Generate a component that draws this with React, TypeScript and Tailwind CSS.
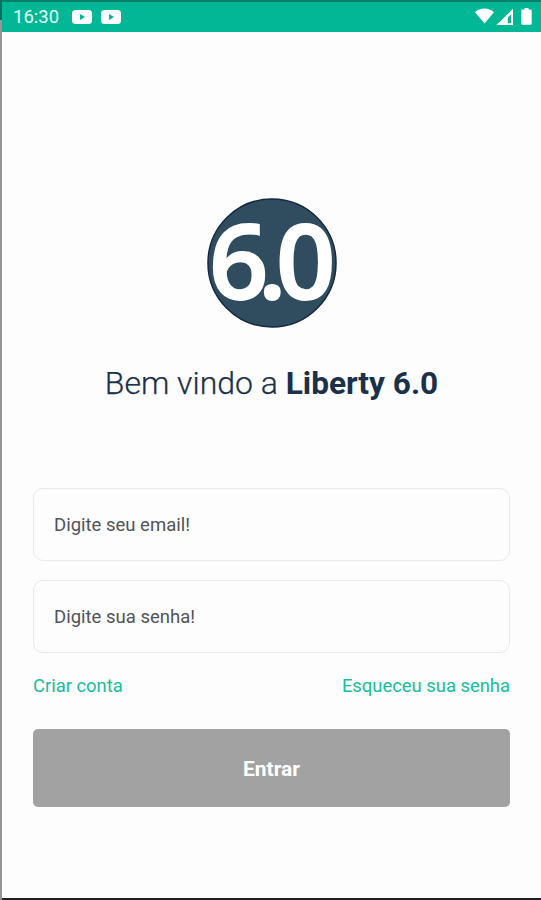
import { useState } from 'react';

function PlayBadge() {
  return (
    <svg width="20" height="14" viewBox="0 0 20 14">
      <rect width="20" height="14" rx="3.5" fill="#fff" />
      <path d="M8 4v6l5-3z" fill="#02b795" />
    </svg>
  );
}

function StatusBar() {
  return (
    <header className="flex h-8 shrink-0 items-center border-t-2 border-[#04806a] bg-[#02b795] pl-[11px] pr-2 text-white">
      <span className="w-[59px] text-[18.5px] leading-none text-[#e2fff8]">16:30</span>
      <div className="flex gap-[9px]">
        <PlayBadge />
        <PlayBadge />
      </div>
      <svg className="ml-auto" width="58" height="18" viewBox="0 0 58 18" fill="#fff">
        <path d="M0 4.2C5.5-.6 13.5-.6 19 4.2L9.5 15.500z" />
        <path fillRule="evenodd" d="M38 .7V17H21.5zM36 6.500L32.800 9.700V15.200H36z" />
        <path d="M49.500 0h4v1.500h2q1.200 0 1.200 1.200v12.800q0 1.200-1.200 1.200h-8q-1.200 0-1.200-1.200V2.700q0-1.200 1.200-1.200h2z" />
      </svg>
    </header>
  );
}

function Logo() {
  return (
    <svg width="130" height="130" viewBox="0 0 130 130" overflow="visible">
      <circle cx="65" cy="65" r="64" fill="#304d60" stroke="#14283f" strokeWidth="1.5" />
      <text
        x="2"
        y="101"
        fill="#fff"
        stroke="#fff"
        strokeWidth="1.8"
        fontFamily="'Open Sans', 'Noto Sans', sans-serif"
        fontSize="104"
        fontWeight="600"
        letterSpacing="-10.5"
      >
        6.0
      </text>
    </svg>
  );
}

type FieldProps = {
  type: string;
  placeholder: string;
  value: string;
  onChange: (value: string) => void;
};

function Field({ type, placeholder, value, onChange }: FieldProps) {
  return (
    <input
      type={type}
      placeholder={placeholder}
      value={value}
      onChange={(e) => onChange(e.target.value)}
      className="h-[73px] w-full rounded-[10px] border-[1.5px] border-[#e8e9e9] bg-[#fdfdfe] px-5 pt-px text-[18.5px] text-[#505357] outline-none placeholder:text-[#505357]"
    />
  );
}

export default function App() {
  const [email, setEmail] = useState('');
  const [password, setPassword] = useState('');

  return (
    <div className="flex h-[900px] w-full bg-[#fdfdfd] font-['Roboto',sans-serif]">
      <div className="flex w-0.5 shrink-0 flex-col">
        <div className="h-5 bg-[#04705f]" />
        <div className="flex-1 bg-[#969696]" />
      </div>
      <div className="flex min-w-0 flex-1 flex-col border-b-2 border-[#202020]">
        <StatusBar />
        <main className="flex flex-1 flex-col px-[31px] pt-[166px]">
          <div className="flex flex-col items-center">
            <Logo />
            <h1 className="mt-[35px] h-10 whitespace-nowrap text-[32px] leading-10 font-light text-[#1b3049] [-webkit-text-stroke:0.25px_#1b3049]">
              Bem vindo a <strong className="text-[31.6px] font-bold [-webkit-text-stroke:0]">Liberty 6.0</strong>
            </h1>
          </div>
          <form className="mt-[85px] flex flex-col" onSubmit={(e) => e.preventDefault()}>
            <div className="flex flex-col gap-[19px]">
              <Field type="email" placeholder="Digite seu email!" value={email} onChange={setEmail} />
              <Field type="password" placeholder="Digite sua senha!" value={password} onChange={setPassword} />
            </div>
            <div className="mt-[21px] flex justify-between text-[18.4px] leading-6 text-[#17bd9c]">
              <a href="#">Criar conta</a>
              <a href="#">Esqueceu sua senha</a>
            </div>
            <button className="mt-[31px] h-[78px] rounded-[5px] bg-[#a2a2a2] pt-1 text-[21px] font-bold text-white">
              Entrar
            </button>
          </form>
        </main>
      </div>
    </div>
  );
}
